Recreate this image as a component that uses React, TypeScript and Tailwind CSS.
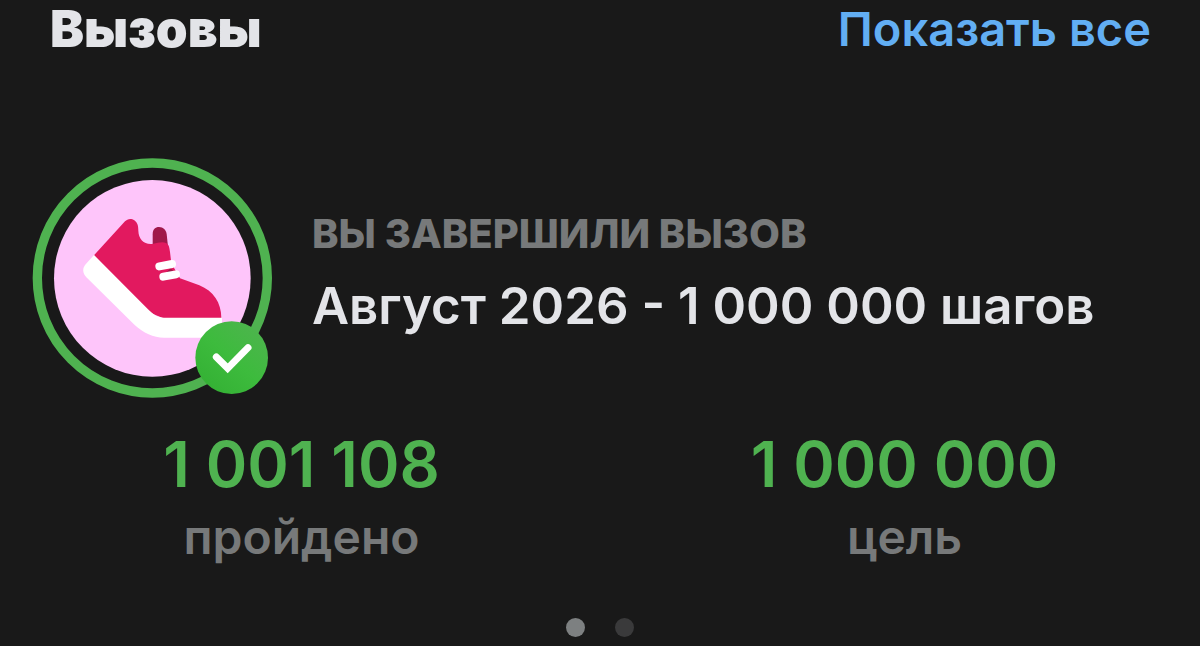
const stats = [
    { value: "1 001 108", label: "пройдено" },
    { value: "1 000 000", label: "цель" },
];

function Medal() {
    return (
        <svg className="w-60 h-60 shrink-0" viewBox="36 24 720 720" fill="none" role="img" aria-label="Вызов завершён">
            <defs>
                <linearGradient id="badge" x1="560" y1="700" x2="700" y2="540" gradientUnits="userSpaceOnUse">
                    <stop offset="0" stopColor="#35b235" />
                    <stop offset="0.5" stopColor="#3dbb3d" />
                    <stop offset="1" stopColor="#4bb54b" />
                </linearGradient>
            </defs>
            <circle cx="397" cy="384" r="345" stroke="#4fb250" strokeWidth="28" />
            <circle cx="397" cy="385" r="295" fill="#fec5fa" />
            {/* tongue */}
            <path d="M398 284V253C398 238 406 231 417 231C430 231 438 240 440 252L444 290Z" fill="#a0184a" />
            {/* upper */}
            <path d="M222 316L315 214C322 206 334 204 343 211C352 218 355 226 355 242C356 270 374 285 400 281C414 278 428 274 438 279C447 284 448 292 450 306L454 340L480 385L538 406C580 423 604 458 604 504H428L380 484Z" fill="#e2195f" />
            {/* sole */}
            <path d="M222 315L384 478C402 496 414 503 432 503H606V525C606 546 592 563 570 563H432C400 563 370 549 344 525L199 382C187 369 187 354 197 343Z" fill="#fff" />
            {/* laces */}
            <path d="M452 354L462 366L440 366Z" fill="#a0184a" />
            <path d="M418 349L456 342M430 380L468 373" stroke="#fff" strokeWidth="24" strokeLinecap="round" />
            <circle cx="635" cy="623" r="109" fill="url(#badge)" />
            <path d="M589 621L623 655L684 593" stroke="#fff" strokeWidth="21" strokeLinecap="round" />
        </svg>
    )
}

export default function App() {
    return (
        <main className="min-h-screen bg-[#191919] font-['Inter','Liberation_Sans',sans-serif] text-[#e3e4e8]">
            <header className="flex items-center justify-between pl-[50px] pr-[49px]">
                <h1 className="text-[51px] leading-[58px] font-black">Вызовы</h1>
                <a href="#all" className="text-[47px] leading-[58px] font-semibold text-[#62aef3]">Показать все</a>
            </header>

            <section className="flex items-center gap-10 pl-8 pt-[100px]">
                <Medal />
                <div className="whitespace-nowrap">
                    <p className="text-[40px] leading-[56px] font-extrabold uppercase text-[#77797a]">Вы завершили вызов</p>
                    <h2 className="text-[51px] leading-[88px] font-semibold">Август 2026 - 1 000 000 шагов</h2>
                </div>
            </section>

            <dl className="grid grid-cols-2 gap-3 pl-1.5 pt-[26px] text-center">
                {stats.map((stat) => (
                    <div key={stat.label} className="flex flex-col-reverse">
                        <dt className="text-[48px] leading-[66px] font-semibold text-[#77797a]">{stat.label}</dt>
                        <dd className="text-[63px] leading-[80px] font-semibold text-[#4fb250]">{stat.value}</dd>
                    </div>
                ))}
            </dl>

            <nav className="flex justify-center gap-[30px] pt-12" aria-label="Страницы">
                <button className="size-[19px] rounded-full bg-[#7d8081]" aria-label="1" aria-current="true"></button>
                <button className="size-[19px] rounded-full bg-[#3a3a3b]" aria-label="2"></button>
            </nav>
        </main>
    )
}
